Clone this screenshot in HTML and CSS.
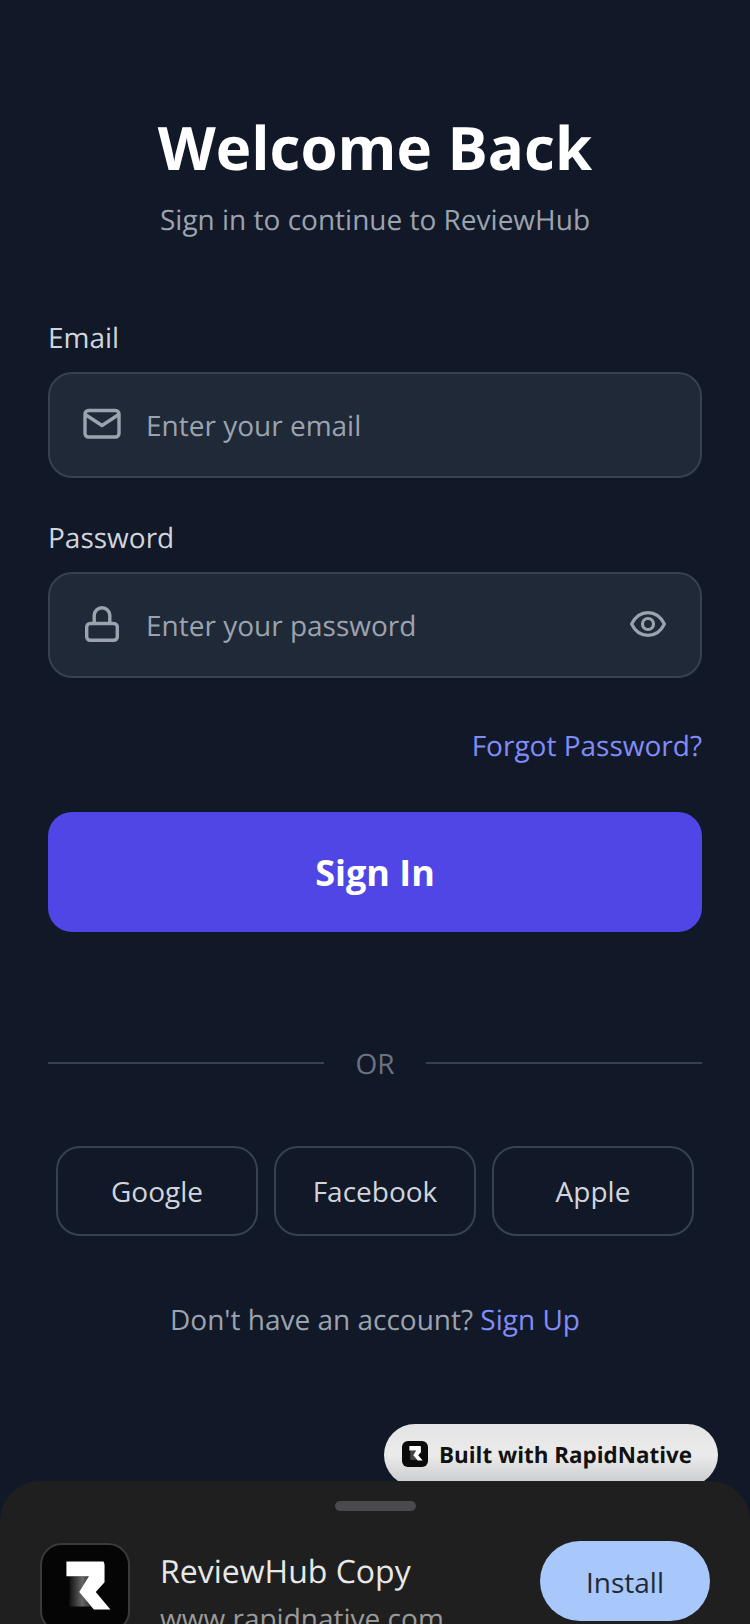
FILE: index.html
```html
<!DOCTYPE html>
<html lang="en">
<head>
    <meta charset="UTF-8">
    <meta name="viewport" content="width=device-width, initial-scale=1.0">
    <title>Welcome Back</title>
    <link rel="stylesheet" href="styles.css">
</head>
<body>
    <div class="screen">
        <div class="header">
            <h1>Welcome Back</h1>
            <p>Sign in to continue to ReviewHub</p>
        </div>

        <form class="login">
            <label class="field-label">Email</label>
            <div class="field">
                <svg class="field-icon" viewBox="0 0 40 40" fill="none" stroke="#9ca3af" stroke-width="3.4" stroke-linecap="round" stroke-linejoin="round">
                    <rect x="3" y="5.500" width="34" height="26.500" rx="3.5"/>
                    <path d="M4 10 L20 20.500 L36 10"/>
                </svg>
                <span class="placeholder">Enter your email</span>
            </div>

            <label class="field-label second">Password</label>
            <div class="field">
                <svg class="field-icon" viewBox="0 0 40 40" fill="none" stroke="#9ca3af" stroke-width="3.4" stroke-linecap="round" stroke-linejoin="round">
                    <rect x="4.700" y="18.500" width="30.600" height="16.800" rx="3.5"/>
                    <path d="M12.200 18 V10.500 A7.800 7.800 0 0 1 27.800 10.500 V18"/>
                </svg>
                <span class="placeholder">Enter your password</span>
                <svg class="eye-icon" viewBox="0 0 40 40" fill="none" stroke="#9ca3af" stroke-width="3.2" stroke-linecap="round" stroke-linejoin="round">
                    <path d="M3.600 20 C7.500 12 13 8.600 20 8.600 C27 8.600 32.500 12 36.400 20 C32.500 28 27 31.400 20 31.400 C13 31.400 7.500 28 3.600 20 Z"/>
                    <circle cx="20" cy="20" r="5.500"/>
                </svg>
            </div>

            <a class="forgot">Forgot Password?</a>
            <button type="button" class="sign-in">Sign In</button>
        </form>

        <div class="divider">
            <span class="line"></span>
            <span class="or">OR</span>
            <span class="line"></span>
        </div>

        <div class="social">
            <button type="button">Google</button>
            <button type="button">Facebook</button>
            <button type="button">Apple</button>
        </div>

        <p class="signup">Don't have an account? <a>Sign Up</a></p>
    </div>

    <div class="badge">
        <svg class="badge-logo" viewBox="0 0 88 88">
            <rect width="88" height="88" rx="20" fill="#0a0a0a"/>
            <path d="M28 32 H48 L38 48 L50 64 H28 Z" fill="#444"/>
            <path d="M25 17 H63 L64 20 V38 L55 48 L70 66 H53 L38 48 L48 32 H25 Z" fill="#fff"/>
        </svg>
        <span>Built with RapidNative</span>
    </div>

    <div class="sheet">
        <div class="handle"></div>
        <div class="sheet-row">
            <div class="app-icon">
                <svg viewBox="0 0 88 88">
                    <defs>
                        <linearGradient id="shade" x1="0" y1="0" x2="1" y2="0">
                            <stop offset="0" stop-color="#101010"/>
                            <stop offset="0.6" stop-color="#666"/>
                            <stop offset="1" stop-color="#333"/>
                        </linearGradient>
                    </defs>
                    <path d="M28 32 H48 L38 48 L50 63 H28 Z" fill="url(#shade)"/>
                    <path d="M25 17 H63 L64 20 V38 L55 48 L70 66 H53 L38 48 L48 32 H25 Z" fill="#fff"/>
                </svg>
            </div>
            <div class="app-text">
                <div class="app-name">ReviewHub Copy</div>
                <div class="app-url">www.rapidnative.com</div>
            </div>
            <button type="button" class="install">Install</button>
        </div>
    </div>
</body>
</html>
```

FILE: styles.css
```css
* {
    box-sizing: border-box;
}

html, body {
    margin: 0;
    padding: 0;
    height: 1624px;
    overflow: hidden;
}

body {
    position: relative;
    font-family: "Open Sans", sans-serif;
    text-rendering: geometricPrecision;
    background-color: #111827;
    color: #d1d5db;
}

.screen {
    padding: 103px 48px 0;
}

.header {
    text-align: center;
}

.header h1 {
    margin: 0;
    font-size: 60px;
    line-height: 88px;
    font-weight: 700;
    color: #fff;
}

.header p {
    margin: 9px 0 0;
    font-size: 28px;
    line-height: 40px;
    color: #9ca3af;
}

.login {
    display: flex;
    flex-direction: column;
    margin-top: 78px;
}

.field-label {
    font-size: 28px;
    line-height: 40px;
    color: #d1d5db;
    margin-bottom: 14px;
}

.field-label.second {
    margin-top: 40px;
}

.field {
    display: flex;
    align-items: center;
    height: 106px;
    padding: 0 32px;
    background-color: #1f2937;
    border: 2px solid #374151;
    border-radius: 24px;
}

.field-icon {
    width: 40px;
    height: 40px;
    flex: none;
}

.placeholder {
    margin: 2px 0 0 24px;
    flex: 1;
    font-size: 28px;
    line-height: 40px;
    color: #9ca3af;
}

.eye-icon {
    width: 40px;
    height: 40px;
    flex: none;
    margin-top: -3px;
}

.forgot {
    align-self: flex-end;
    margin-top: 48px;
    font-size: 28px;
    line-height: 40px;
    color: #818cf8;
}

.sign-in {
    margin-top: 46px;
    height: 120px;
    border: none;
    border-radius: 24px;
    background-color: #4f46e5;
    color: #fff;
    font-family: inherit;
    font-size: 36px;
    font-weight: 700;
}

.divider {
    display: flex;
    align-items: center;
    gap: 31px;
    margin-top: 112px;
}

.line {
    flex: 1;
    height: 2px;
    margin-top: -2px;
    background-color: #374151;
}

.or {
    font-size: 28px;
    line-height: 40px;
    color: #6b7280;
}

.social {
    display: flex;
    justify-content: center;
    gap: 16px;
    margin-top: 62px;
}

.social button {
    width: 202px;
    height: 90px;
    background: transparent;
    border: 2px solid #374151;
    border-radius: 24px;
    color: #d1d5db;
    font-family: inherit;
    font-size: 28px;
}

.signup {
    margin: 64px 0 0;
    text-align: center;
    font-size: 28px;
    line-height: 40px;
    color: #9ca3af;
}

.signup a {
    color: #818cf8;
}

.badge {
    position: absolute;
    left: 384px;
    top: 1424px;
    width: 334px;
    height: 62px;
    padding: 0 0 2px 18px;
    display: flex;
    align-items: center;
    gap: 11px;
    border-radius: 31px;
    background: linear-gradient(#e4e4e6 0%, #ebebeb 50%, #cdced0 92%);
    color: #111;
    font-size: 22.400px;
    font-weight: 700;
}

.badge-logo {
    width: 26px;
    height: 26px;
    flex: none;
}

.sheet {
    position: absolute;
    left: 0;
    right: 0;
    top: 1481px;
    height: 143px;
    background-color: #1f1f1f;
    border-radius: 40px 40px 0 0;
    overflow: hidden;
}

.handle {
    width: 81px;
    height: 10px;
    margin: 20px 0 0 335px;
    border-radius: 5px;
    background-color: #4a4a4c;
}

.sheet-row {
    display: flex;
    align-items: flex-start;
    padding: 30px 40px 0;
}

.app-icon {
    width: 90px;
    height: 90px;
    margin-top: 2px;
    flex: none;
    background-color: #050505;
    border: 2px solid #3a3a3a;
    border-radius: 22px;
}

.app-icon svg {
    display: block;
    width: 100%;
    height: 100%;
}

.app-text {
    flex: 1;
    margin-left: 30px;
}

.app-name {
    margin-top: 9px;
    font-size: 32px;
    line-height: 44px;
    color: #e8e8e8;
}

.app-url {
    margin-top: 5px;
    font-size: 28px;
    line-height: 40px;
    color: #9a9a9a;
}

.install {
    width: 170px;
    height: 80px;
    padding-top: 2px;
    border: none;
    border-radius: 40px;
    background-color: #a8c7fa;
    color: #1f2937;
    font-family: inherit;
    font-size: 28px;
}
```
